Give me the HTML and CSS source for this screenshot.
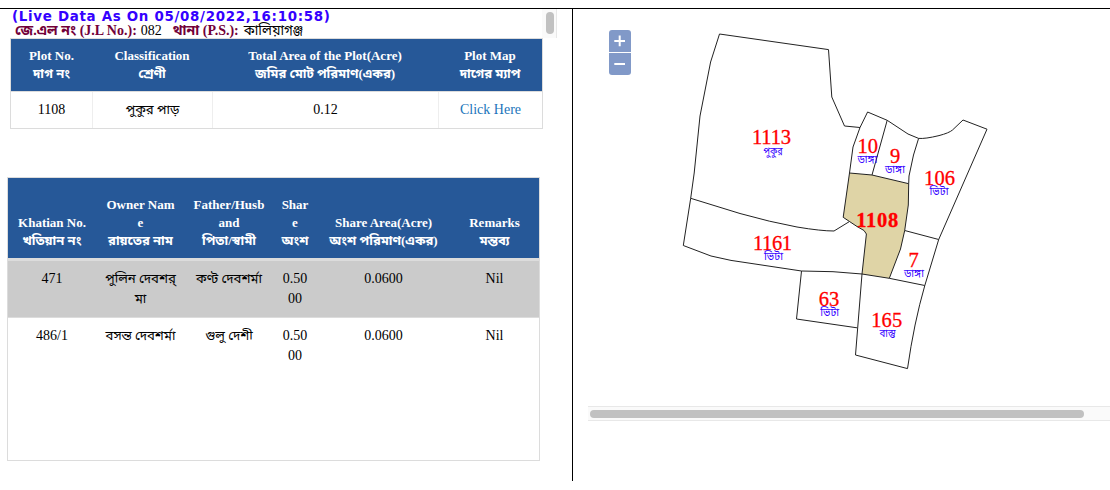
FILE: index.html
```
<!DOCTYPE html>
<html lang="bn">
<head>
<meta charset="utf-8">
<title>Plot Information</title>
<link rel="stylesheet" href="styles.css">
</head>
<body>
<main class="page">
  <section class="info">
    <header class="summary">
      <div class="summary-text">
        <div class="live">(Live Data As On 05/08/2022,16:10:58)</div>
        <div class="place"><b class="bn">জে.এল নং</b><b> (J.L No.):</b><span class="value">082</span><b class="bn">থানা</b><b> (P.S.):</b><span class="value bn">কালিয়াগঞ্জ</span></div>
      </div>
      <div class="vscroll"><div class="vthumb"></div></div>
    </header>
    <div class="plot">
      <div class="plot-row head">
        <div><p>Plot No.</p><p class="bn">দাগ নং</p></div>
        <div><p>Classification</p><p class="bn">শ্রেণী</p></div>
        <div><p>Total Area of the Plot(Acre)</p><p class="bn">জমির মোট পরিমাণ(একর)</p></div>
        <div><p>Plot Map</p><p class="bn">দাগের ম্যাপ</p></div>
      </div>
      <div class="plot-row cells">
        <div>1108</div>
        <div class="bn">পুকুর পাড়</div>
        <div>0.12</div>
        <div><a class="link">Click Here</a></div>
      </div>
    </div>
    <div class="owners">
      <div class="owner-row head">
        <div><p>Khatian No.</p><p class="bn">খতিয়ান নং</p></div>
        <div><p>Owner Nam</p><p>e</p><p class="bn">রায়তের নাম</p></div>
        <div><p>Father/Husb</p><p>and</p><p class="bn">পিতা/স্বামী</p></div>
        <div><p>Shar</p><p>e</p><p class="bn">অংশ</p></div>
        <div><p>Share Area(Acre)</p><p class="bn">অংশ পরিমাণ(একর)</p></div>
        <div><p>Remarks</p><p class="bn">মন্তব্য</p></div>
      </div>
      <div class="owner-row cells shaded">
        <div>471</div>
        <div class="bn">পুলিন দেবশর্<br>মা</div>
        <div class="bn">কণ্ট দেবশর্মা</div>
        <div>0.50<br>00</div>
        <div>0.0600</div>
        <div>Nil</div>
      </div>
      <div class="owner-row cells">
        <div>486/1</div>
        <div class="bn">বসন্ত দেবশর্মা</div>
        <div class="bn">গুলু দেশী</div>
        <div>0.50<br>00</div>
        <div>0.0600</div>
        <div>Nil</div>
      </div>
    </div>
  </section>
  <section class="map">
    <svg class="parcels" viewBox="573 9 537 397" width="537" height="397">
      <path class="selected" d="M849.5 173L872 175L908.7 183.7L908.3 205L904.7 230.5L900.5 249L889.3 278.3L862 274L866.4 234L864 230.5L857 226.5L849.5 221.5L843.2 217.3Z"/>
      <g class="lines">
        <path d="M860 127.5L844.5 126L831.8 97L828.5 49.6L719.5 34L710.6 62L700 116L694.2 173L690.7 198.3L683.3 245.5L711 256L731 260.4L801.5 271L833 271.7L862 274"/>
        <path d="M690.7 198.3L740 213.5Q770 222 797 227Q821 231 834 231L849.5 221.5"/>
        <path d="M849.5 173L853 147L860 127.5L867.6 112L887.2 120.3L872 175"/>
        <path d="M887.2 120.3L908 134L918.6 138.4L913.5 155L909 176L908.7 183.7"/>
        <path d="M918.6 138.4Q925 139 939 135.6Q949 133 952.5 130L963 120L987 129.2L938.7 239.5L904.7 230.5"/>
        <path d="M938.7 239.5L924.8 285.5L889.3 278.3M924.8 285.5Q914 323 907.5 368.6L855.5 355L862 274"/>
        <path d="M801.5 271L796.5 319L857 327.8"/>
      </g>
      <g class="number">
        <text x="771.5" y="144" textLength="39">1113</text>
        <text x="867.8" y="153" textLength="20.5">10</text>
        <text x="895" y="163">9</text>
        <text x="939.5" y="185" textLength="31">106</text>
        <text x="877.2" y="226.5" textLength="42" class="strong">1108</text>
        <text x="772.5" y="250" textLength="39">1161</text>
        <text x="913.5" y="267">7</text>
        <text x="829" y="306" textLength="20.5">63</text>
        <text x="886.7" y="327" textLength="31">165</text>
      </g>
      <g class="kind">
        <text x="773" y="154.5" textLength="19" lengthAdjust="spacingAndGlyphs">পুকুর</text>
        <text x="867.5" y="163" textLength="20" lengthAdjust="spacingAndGlyphs">ডাঙ্গা</text>
        <text x="895" y="173" textLength="20" lengthAdjust="spacingAndGlyphs">ডাঙ্গা</text>
        <text x="939" y="195" textLength="19" lengthAdjust="spacingAndGlyphs">ভিটা</text>
        <text x="773.5" y="260" textLength="19" lengthAdjust="spacingAndGlyphs">ভিটা</text>
        <text x="914" y="277" textLength="20" lengthAdjust="spacingAndGlyphs">ডাঙ্গা</text>
        <text x="829.7" y="316" textLength="19" lengthAdjust="spacingAndGlyphs">ভিটা</text>
        <text x="887.5" y="337" textLength="16" lengthAdjust="spacingAndGlyphs">বাস্তু</text>
      </g>
    </svg>
    <div class="zoom">
      <button class="zoom-in" aria-label="Zoom in"><svg viewBox="0 0 22 22"><path d="M5.3 11H16M10.7 5.5V16.3"/></svg></button>
      <button class="zoom-out" aria-label="Zoom out"><svg viewBox="0 0 22 22"><path d="M5.3 11H16"/></svg></button>
    </div>
    <div class="hscroll"><div class="hthumb"></div></div>
  </section>
</main>
</body>
</html>
```
FILE: styles.css
```
* { box-sizing: border-box; }
body {
  margin: 8px 0 0;
  background: #fff;
  color: #000;
  font-family: "Liberation Serif", "Noto Sans Bengali", "Noto Sans", serif;
  font-size: 14px;
  overflow: hidden;
}
p { margin: 0; }
.page {
  display: grid;
  grid-template-columns: 573px 537px;
  height: 473px;
  border-top: 1px solid #000;
}
.info { border-right: 1px solid #000; }
.summary { display: flex; height: 29px; }
.summary-text { width: 542px; padding-left: 12px; }
.live {
  height: 14px;
  font: bold 13.4px/15px "DejaVu Sans", sans-serif;
  letter-spacing: 0.7px;
  color: #3400ff;
  white-space: nowrap;
}
.place {
  height: 15px;
  padding-left: 3px;
  line-height: 15px;
  white-space: pre;
}
.place b { color: #720038; }
.value { margin: 0 11px 0 4px; }
.place .value.bn { margin-left: 5px; font-size: 13.6px; }
.vscroll { width: 15px; padding: 3px 0 0 4px; background: #fafafa; border-right: 1px solid #e8e8e8; }
.vthumb { width: 8px; height: 22px; border-radius: 4px; background: #c1c1c1; }

.plot {
  width: 533px;
  height: 91px;
  margin-left: 10px;
  border: 1px solid #dcdcdc;
}
.plot-row { display: grid; grid-template-columns: 81px 120px 226px 104px; text-align: center; }
.head { background: #265898; color: #fff; font-weight: bold; font-size: 13px; }
.head p { height: 18px; line-height: 18px; white-space: nowrap; }
.plot .head { height: 52px; padding-top: 8px; }
.plot .cells { height: 37px; line-height: 35px; border-top: 1px solid #dcdcdc; }
.plot .cells > div + div { border-left: 1px solid #eee; }
.cells .bn { font-size: 13.2px; }
.link { color: #1b75bb; }

.owners {
  width: 533px;
  height: 284px;
  margin: 48px 0 0 7px;
  border: 1px solid #dcdcdc;
}
.owner-row { display: grid; grid-template-columns: 88px 89px 88px 44px 133px 89px; text-align: center; }
.owners .head { height: 83px; align-items: end; padding-bottom: 8px; border-bottom: 3px solid #dcdcdc; }
.owners .cells { height: 57px; padding-top: 8px; line-height: 20px; white-space: nowrap; }
.shaded { background: #cbcbcb; border-bottom: 1px solid #dcdcdc; }

.map { position: relative; overflow: hidden; }
.parcels { display: block; }
.selected { fill: #dfd4a6; stroke: #222; }
.lines { fill: none; stroke: #222; stroke-width: 1; }
.number { fill: #f00; stroke: #f00; stroke-width: 0.3; font-size: 20.5px; text-anchor: middle; }
.strong { font-weight: bold; }
.kind { fill: #3400ff; font-size: 11.5px; text-anchor: middle; }
.zoom { position: absolute; left: 36px; top: 21px; display: grid; gap: 1px; }
.zoom button { width: 22px; height: 22px; padding: 0; border: 0; background: #8199c8; }
.zoom svg { display: block; width: 22px; height: 22px; fill: none; stroke: #fff; stroke-width: 2; }
.zoom .zoom-in { border-radius: 3px 3px 0 0; }
.zoom .zoom-out { border-radius: 0 0 3px 3px; }
.hscroll {
  height: 15px;
  margin-left: 15px;
  padding: 3px 0 0 2px;
  background: #fafafa;
  border: solid #e8e8e8;
  border-width: 1px 0;
}
.hthumb { width: 494px; height: 8px; border-radius: 4px; background: #c1c1c1; }
```
